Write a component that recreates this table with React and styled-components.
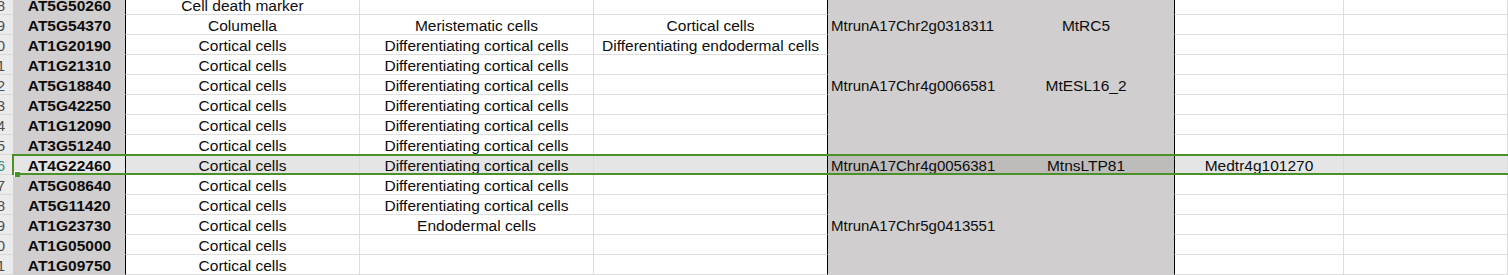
import styled, { createGlobalStyle, css } from 'styled-components';

const GlobalStyle = createGlobalStyle`
  html, body {
    margin: 0;
    padding: 0;
    background: #ffffff;
    overflow: hidden;
  }
`;

// column widths, gridline included
const COLUMNS = '14px 112px 234px 234px 234px 170px 177px 169px 1fr';

const rows = [
  { n: 18, id: 'AT5G50260', c: 'Cell death marker' },
  { n: 19, id: 'AT5G54370', c: 'Columella', d: 'Meristematic cells', e: 'Cortical cells', f: 'MtrunA17Chr2g0318311', g: 'MtRC5' },
  { n: 20, id: 'AT1G20190', c: 'Cortical cells', d: 'Differentiating cortical cells', e: 'Differentiating endodermal cells' },
  { n: 21, id: 'AT1G21310', c: 'Cortical cells', d: 'Differentiating cortical cells' },
  { n: 22, id: 'AT5G18840', c: 'Cortical cells', d: 'Differentiating cortical cells', f: 'MtrunA17Chr4g0066581', g: 'MtESL16_2' },
  { n: 23, id: 'AT5G42250', c: 'Cortical cells', d: 'Differentiating cortical cells' },
  { n: 24, id: 'AT1G12090', c: 'Cortical cells', d: 'Differentiating cortical cells' },
  { n: 25, id: 'AT3G51240', c: 'Cortical cells', d: 'Differentiating cortical cells' },
  { n: 26, id: 'AT4G22460', c: 'Cortical cells', d: 'Differentiating cortical cells', f: 'MtrunA17Chr4g0056381', g: 'MtnsLTP81', h: 'Medtr4g101270', selected: true },
  { n: 27, id: 'AT5G08640', c: 'Cortical cells', d: 'Differentiating cortical cells' },
  { n: 28, id: 'AT5G11420', c: 'Cortical cells', d: 'Differentiating cortical cells' },
  { n: 29, id: 'AT1G23730', c: 'Cortical cells', d: 'Endodermal cells', f: 'MtrunA17Chr5g0413551' },
  { n: 30, id: 'AT1G05000', c: 'Cortical cells' },
  { n: 31, id: 'AT1G09750', c: 'Cortical cells' },
];

function App() {
  return (
    <>
      <GlobalStyle />
      <Sheet>
        {rows.map((r) => (
          <Row key={r.n} $selected={r.selected}>
            <RowHeader $selected={r.selected}>
              <span>{r.n}</span>
            </RowHeader>
            <Cell $fill $bold $edge $selected={r.selected} $light>{r.id}</Cell>
            <Cell $selected={r.selected}>{r.c}</Cell>
            <Cell $selected={r.selected}>{r.d}</Cell>
            <Cell $edge $selected={r.selected}>{r.e}</Cell>
            <Cell $fill $left $selected={r.selected}>{r.f}</Cell>
            <Cell $fill $edge $selected={r.selected}>{r.g}</Cell>
            <Cell $selected={r.selected}>{r.h}</Cell>
            <Cell $selected={r.selected} />
          </Row>
        ))}
      </Sheet>
    </>
  );
}

const Sheet = styled.div`
  display: flex;
  flex-direction: column;
  margin-top: -5px;
  width: 1508px;
  font-family: "Liberation Sans", Arial, sans-serif;
  font-size: 15.5px;
  color: #0d0d0d;
`;

const Row = styled.div`
  position: relative;
  display: grid;
  grid-template-columns: ${COLUMNS};
  height: 20px;

  ${(p) =>
    p.$selected &&
    css`
      z-index: 1;

      &::after {
        content: '';
        position: absolute;
        left: 12px;
        right: -4px;
        top: -1px;
        bottom: 0;
        border: 2px solid #4a9127;
        pointer-events: none;
      }
      &::before {
        content: '';
        position: absolute;
        left: 14px;
        bottom: -2px;
        width: 5px;
        height: 5px;
        background: #4a9127;
        border-top: 1px solid #ffffff;
        border-left: 1px solid #ffffff;
        z-index: 2;
      }
    `}
`;

const RowHeader = styled.div`
  display: flex;
  justify-content: flex-end;
  align-items: flex-start;
  overflow: hidden;
  box-sizing: border-box;
  padding: 2px 8px 0 0;
  line-height: 18px;
  font-size: 15px;
  background: #ebebeb;
  border-right: 1px solid #cfcfcf;
  border-bottom: 1px solid #d9d9d9;
  color: ${(p) => (p.$selected ? '#2f8f7a' : '#4d4d4d')};
  white-space: nowrap;

  span {
    flex: none;
  }
`;

const cellBg = (p) => {
  if (p.$selected) return p.$fill && !p.$light ? '#bebbbb' : '#e5e5e5';
  return p.$fill ? '#d0cece' : '#ffffff';
};

const Cell = styled.div`
  box-sizing: border-box;
  height: 20px;
  padding: 2px 2px 0 ${(p) => (p.$left ? '3px' : '2px')};
  line-height: 18px;
  font-size: ${(p) => (p.$left ? '15px' : 'inherit')};
  overflow: hidden;
  white-space: nowrap;
  text-align: ${(p) => (p.$left ? 'left' : 'center')};
  font-weight: ${(p) => (p.$bold ? 700 : 400)};
  background: ${cellBg};
  border-right: 1px solid ${(p) => (p.$edge ? '#000000' : p.$fill ? cellBg(p) : '#dddddd')};
  border-bottom: 1px solid ${(p) => (p.$fill && !p.$selected ? '#d0cece' : '#dddddd')};
`;

export default App;
